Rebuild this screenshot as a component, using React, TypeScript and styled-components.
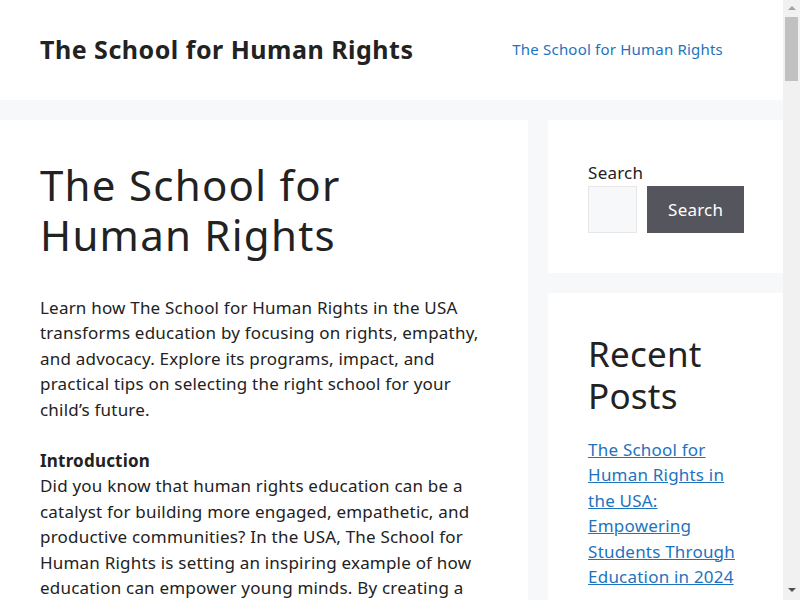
import React from "react";
import styled, { createGlobalStyle } from "styled-components";

const Global = createGlobalStyle`
  html, body { margin: 0; padding: 0; }
  body {
    background: #f7f8f9;
    color: #222222;
    font-family: "Noto Sans", "Open Sans", sans-serif;
    font-size: 17px;
    line-height: 1.5;
    letter-spacing: 0.012em;
    margin-right: 17px;
  }
  * { box-sizing: border-box; }
`;

const Header = styled.header`
  background: #ffffff;
  display: flex;
  align-items: center;
  justify-content: space-between;
  padding: 20px 40px;
  height: 100px;
`;

const SiteTitle = styled.a`
  font-size: 25px;
  font-weight: 700;
  color: #222222;
  text-decoration: none;
  line-height: 1.5;
  letter-spacing: 0.02em;
`;

const Nav = styled.nav`
  display: flex;
`;

const NavLink = styled.a`
  display: block;
  padding: 0 20px;
  line-height: 60px;
  font-size: 15px;
  color: #1e73be;
  text-decoration: none;
  transform: translateY(-1px);
`;

const Site = styled.div`
  display: flex;
  margin-top: 20px;
  align-items: flex-start;
`;

const Main = styled.main`
  width: 70%;
  padding-right: 20px;
`;

const Article = styled.article`
  background: #ffffff;
  padding: 40px;
`;

const Title = styled.h1`
  font-size: 42px;
  font-weight: 400;
  line-height: 1.2;
  letter-spacing: 0.03em;
  margin: 0 0 34px;
`;

const Para = styled.p`
  margin: 0 0 1.5em;
`;

const Sidebar = styled.aside`
  width: 30%;
  display: flex;
  flex-direction: column;
  gap: 20px;
`;

const Widget = styled.section`
  background: #ffffff;
  padding: 40px;
`;

const SearchLabel = styled.label`
  display: block;
`;

const SearchRow = styled.div`
  display: flex;
  gap: 10px;
`;

const SearchInput = styled.input`
  width: 49px;
  height: 47px;
  background: #f7f8f9;
  border: 1px solid #e6e6e6;
  padding: 0;
`;

const SearchButton = styled.button`
  height: 47px;
  padding: 0 21px;
  background: #55555e;
  color: #ffffff;
  border: none;
  font-family: inherit;
  font-size: 17px;
  letter-spacing: 0.012em;
`;

const WidgetTitle = styled.h2`
  font-size: 35px;
  font-weight: 400;
  line-height: 1.2;
  margin: 0 0 20px;
`;

const PostList = styled.ul`
  list-style: none;
  margin: 0;
  padding: 0;
`;

const PostLink = styled.a`
  color: #1e73be;
  text-decoration: underline;
`;

const Scrollbar = styled.div`
  position: fixed;
  top: 0;
  right: 0;
  width: 17px;
  height: 100vh;
  background: #f1f1f1;
  display: flex;
  flex-direction: column;
  align-items: center;
`;

const Arrow = styled.div<{ $up?: boolean; $color: string }>`
  width: 0;
  height: 0;
  border-left: 4px solid transparent;
  border-right: 4px solid transparent;
  ${(p) =>
    p.$up
      ? `border-bottom: 4px solid ${p.$color}; margin-top: 6px;`
      : `border-top: 4px solid ${p.$color}; margin-top: auto; margin-bottom: 8px;`}
`;

const Thumb = styled.div`
  width: 13px;
  height: 64px;
  margin-top: 7px;
  background: #c1c1c1;
`;

export default function App() {
  return (
    <>
      <Global />
      <Header>
        <SiteTitle href="#">The School for Human Rights</SiteTitle>
        <Nav>
          <NavLink href="#">The School for Human Rights</NavLink>
        </Nav>
      </Header>
      <Site>
        <Main>
          <Article>
            <Title>The School for Human Rights</Title>
            <Para>
              Learn how The School for Human Rights in the USA transforms education by focusing on rights,
              empathy, and advocacy. Explore its programs, impact, and practical tips on selecting the right
              school for your child’s future.
            </Para>
            <Para>
              <strong>Introduction</strong>
              <br />
              Did you know that human rights education can be a catalyst for building more engaged, empathetic,
              and productive communities? In the USA, The School for Human Rights is setting an inspiring example
              of how education can empower young minds. By creating a learning environment rooted in respect,
              equality, and social justice, this school prepares students to become thoughtful leaders and
              advocates for change.
            </Para>
            <Para>
              In this article, we will explore the mission of The School for Human Rights, its unique
              curriculum, the benefits it offers students, and practical advice for parents considering this
              educational path.
            </Para>
          </Article>
        </Main>
        <Sidebar>
          <Widget>
            <SearchLabel>Search</SearchLabel>
            <SearchRow>
              <SearchInput type="search" />
              <SearchButton>Search</SearchButton>
            </SearchRow>
          </Widget>
          <Widget>
            <WidgetTitle>Recent Posts</WidgetTitle>
            <PostList>
              <li>
                <PostLink href="#">
                  The School for Human Rights in the USA: Empowering Students Through Education in 2024
                </PostLink>
              </li>
            </PostList>
          </Widget>
        </Sidebar>
      </Site>
      <Scrollbar>
        <Arrow $up $color="#a3a3a3" />
        <Thumb />
        <Arrow $color="#505050" />
      </Scrollbar>
    </>
  );
}
